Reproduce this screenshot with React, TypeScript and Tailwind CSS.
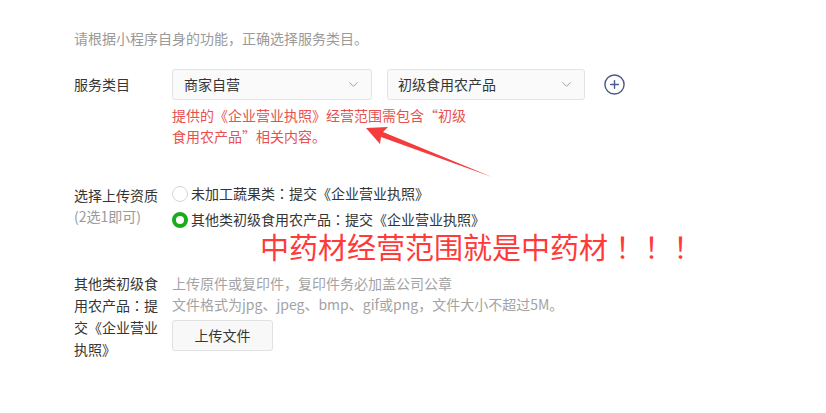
import { ChevronDown, CirclePlus } from "lucide-react";

const FONT = { fontFamily: '"Noto Sans CJK SC", "Noto Sans", sans-serif' };
const TC = { fontFamily: '"Noto Sans CJK TC", sans-serif' };

// centred full-width punctuation, as in the screenshot
const P = ({ c }: { c: string }) => <span style={TC}>{c}</span>;

function Select({ value, width, pad }: { value: string; width: string; pad: string }) {
  return (
    <div className={`${width} ${pad} h-[31px] flex items-center justify-between pr-[10px] bg-[#fafafa] border border-[#e3e3e3] rounded-[3px] text-[#353535]`}>
      <span>{value}</span>
      <ChevronDown size={15} strokeWidth={1.5} className="text-[#9a9a9a]" />
    </div>
  );
}

function Radio({ checked, children }: { checked?: boolean; children: React.ReactNode }) {
  return (
    <div className="flex items-center h-[21px] gap-[3px]">
      {checked ? (
        <span className="w-[16px] h-[16px] rounded-full border-[4px] border-[#1aad19] bg-white" />
      ) : (
        <span className="w-[16px] h-[16px] rounded-full border border-[#d6d6d6] bg-white" />
      )}
      <span className="text-[#353535]">{children}</span>
    </div>
  );
}

export default function App() {
  return (
    <div className="relative w-[826px] h-[413px] bg-white text-[14px] overflow-hidden" style={FONT}>
      <div className="pl-[74px] pt-[28px]">
        <div className="leading-[20px] text-[#9a9a9a]">请根据小程序自身的功能，正确选择服务类目。</div>

        {/* 服务类目 */}
        <div className="flex mt-[21px]">
          <div className="w-[98px] h-[31px] flex items-center text-[#353535]">服务类目</div>
          <div>
            <div className="flex items-center">
              <Select value="商家自营" width="w-[200px]" pad="pl-[11px]" />
              <div className="w-[15px]" />
              <Select value="初级食用农产品" width="w-[198px]" pad="pl-[10px]" />
              <CirclePlus size={23} strokeWidth={1.5} className="ml-[18px] text-[#4b5b8c]" />
            </div>
            <div className="mt-[5px] leading-[21px] text-[#e8504f]">
              提供的《企业营业执照》经营范围需包含“初级
              <br />
              食用农产品”相关内容。
            </div>
          </div>
        </div>

        {/* 选择上传资质 */}
        <div className="flex mt-[38px]">
          <div className="w-[98px] leading-[21px] text-[#353535]">
            <div>选择上传资质</div>
            <div className="text-[#9a9a9a]">(2选1即可)</div>
          </div>
          <div className="-mt-[2px]">
            <Radio>未加工蔬果类<P c="：" />提交《企业营业执照》</Radio>
            <div className="mt-[5px]">
              <Radio checked>其他类初级食用农产品<P c="：" />提交《企业营业执照》</Radio>
            </div>
          </div>
        </div>

        <div className="ml-[186px] leading-[32px] text-[29px] text-[#ff3a3a]">
          中药材经营范围就是中药材<P c="！！！" />
        </div>

        {/* 上传 */}
        <div className="flex mt-[10px]">
          <div className="w-[98px] pr-[12px] leading-[22px] text-[#353535]">
            其他类初级食用农产品<P c="：" />提交《企业营业执照》
          </div>
          <div>
            <div className="leading-[22px] text-[#a3a3a3]">上传原件或复印件，复印件务必加盖公司公章</div>
            <div className="leading-[20px] text-[#a3a3a3]">文件格式为jpg、jpeg、bmp、gif或png，文件大小不超过5M。</div>
            <button className="mt-[6px] w-[101px] h-[31px] bg-[#f8f8f8] border border-[#e1e1e1] rounded-[3px] text-[#353535]">
              上传文件
            </button>
          </div>
        </div>
      </div>

      {/* annotation arrow */}
      <svg className="absolute left-0 top-0 pointer-events-none" width="826" height="413">
        <polygon
          points="366,128 388,127 383,132 492,177 381,137 380,144"
          fill="#f43c3c"
        />
      </svg>
    </div>
  );
}
